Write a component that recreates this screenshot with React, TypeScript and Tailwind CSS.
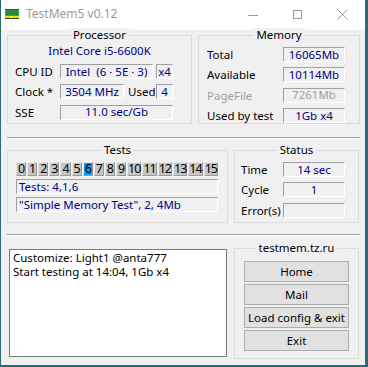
import React from "react";

const tests = Array.from({ length: 16 }, (_, i) => i);

const GroupBox = ({
  title,
  className,
  children,
}: {
  title: string;
  className: string;
  children?: React.ReactNode;
}) => (
  <div className={`relative border border-[#dcdcdc] ${className}`}>
    <span className="absolute left-1/2 -translate-x-1/2 -top-[8px] px-[3px] bg-[#f0f0f0] leading-[14px] whitespace-nowrap">
      {title}
    </span>
    {children}
  </div>
);

const Field = ({
  children,
  className = "",
}: {
  children?: React.ReactNode;
  className?: string;
}) => (
  <div
    className={`h-[15px] flex items-center border border-t-[#a0a0a0] border-l-[#a0a0a0] border-r-white border-b-white leading-none whitespace-nowrap ${className}`}
  >
    {children}
  </div>
);

const Separator = () => (
  <div className="ml-[6px] w-[353px] border-t border-t-[#a0a0a0] border-b border-b-white" />
);

const WinButton = ({ label }: { label: string }) => (
  <div className="h-[21px] flex items-center justify-center bg-[#e1e1e1] border border-[#adadad]">
    {label}
  </div>
);

export default function App() {
  return (
    <div className="w-[368px] h-[367px] bg-[#2b6a74] overflow-hidden font-['Noto_Sans',sans-serif] text-[11.5px] text-black">
      <div className="ml-[1px] w-[364px] h-[365px] bg-[#f0f0f0] flex flex-col">
        {/* title bar */}
        <div className="h-[30px] bg-white flex items-center shrink-0">
          <svg width="14" height="11" viewBox="0 0 14 11" className="ml-[4px] mb-[2px]">
            <rect x="0" y="0" width="14" height="7" fill="#3aa84a" />
            <rect x="0" y="0" width="14" height="1" fill="#1f6b2a" />
            <path d="M2 1v5M4 1v5M6 1v5M8 1v5M10 1v5M12 1v5" stroke="#1f6b2a" strokeWidth="1" />
            <rect x="0" y="7" width="6" height="2" fill="#e5e500" />
            <rect x="7" y="7" width="7" height="2" fill="#e5e500" />
            <rect x="0" y="9" width="14" height="1" fill="#333" />
          </svg>
          <span className="ml-[7px] mb-[2px] text-[12px] text-[#999999]">TestMem5 v0.12</span>
          <div className="ml-auto flex h-full">
            <div className="w-[45px] flex items-center justify-center">
              <div className="w-[10px] h-px bg-[#999999]" />
            </div>
            <div className="w-[45px] flex items-center justify-center">
              <div className="w-[9px] h-[9px] border border-[#999999] mb-[2px]" />
            </div>
            <div className="w-[45px] flex items-center justify-center">
              <svg width="11" height="11" viewBox="0 0 11 11" className="mb-[2px]">
                <path d="M0.5 0.5L10.5 10.5M10.5 0.5L0.5 10.5" stroke="#999999" strokeWidth="1" />
              </svg>
            </div>
          </div>
        </div>

        {/* processor / memory */}
        <div className="flex gap-[6px] pl-[6px] mt-[5px]">
          <GroupBox title="Processor" className="w-[185px] h-[89px]">
            <div className="pt-[8px] h-[22px] leading-[14px] text-center text-[#000080]">
              Intel Core i5-6600K
            </div>
            <div className="mt-[5px] pl-[7px] flex flex-col gap-[3px]">
              <div className="flex items-center">
                <span className="w-[45px]">CPU ID</span>
                <Field className="w-[93px] justify-center text-[#000080]">Intel&nbsp; (6 · 5E · 3)</Field>
                <Field className="ml-[3px] w-[17px] justify-center text-[#000080]">x4</Field>
              </div>
              <div className="flex items-center">
                <span className="w-[45px]">Clock *</span>
                <Field className="w-[64px] justify-center text-[#000080]">3504 MHz</Field>
                <span className="ml-[4px] w-[28px]">Used</span>
                <Field className="w-[17px] justify-center text-[#000080]">4</Field>
              </div>
              <div className="flex items-center">
                <span className="w-[45px]">SSE</span>
                <Field className="w-[113px] justify-center text-[#000080]">11.0 sec/Gb</Field>
              </div>
            </div>
          </GroupBox>
          <GroupBox title="Memory" className="w-[162px] h-[89px]">
            <div className="pt-[10px] pl-[8px] flex flex-col gap-[3px]">
              {[
                ["Total", "16065Mb", false],
                ["Available", "10114Mb", false],
                ["PageFile", "7261Mb", true],
                ["Used by test", "1Gb x4", false],
              ].map(([label, value, dim]) => (
                <div key={label as string} className="flex items-center">
                  <span className={`w-[76px] ${dim ? "text-[#a0a0a0]" : ""}`}>{label}</span>
                  <Field className={`w-[62px] justify-center ${dim ? "text-[#a0a0a0]" : "text-[#000080]"}`}>
                    {value}
                  </Field>
                </div>
              ))}
            </div>
          </GroupBox>
        </div>

        <div className="mt-[13px]">
          <Separator />
        </div>

        {/* tests / status */}
        <div className="flex gap-[6px] pl-[6px] mt-[11px]">
          <GroupBox title="Tests" className="w-[221px] h-[73px]">
            <div className="pt-[11px] pl-[8px] flex flex-col">
              <div className="w-[202px] h-[14px] flex gap-[1px]">
                {tests.map((t) => (
                  <div
                    key={t}
                    className={`flex-1 flex items-center justify-center border border-t-[#e8e8e8] border-l-[#e8e8e8] border-r-[#9a9a9a] border-b-[#9a9a9a] text-[12.5px] tracking-[-1px] leading-none overflow-visible whitespace-nowrap ${
                      t === 6 ? "bg-[#0a9cf0]" : "bg-[#c6c6c6]"
                    }`}
                  >
                    {t}
                  </div>
                ))}
              </div>
              <Field className="mt-[3px] w-[202px] pl-[2px] text-[#000080]">Tests: 4,1,6</Field>
              <Field className="mt-[3px] w-[202px] pl-[2px] text-[#000080]">"Simple Memory Test", 2, 4Mb</Field>
            </div>
          </GroupBox>
          <GroupBox title="Status" className="w-[125px] h-[73px]">
            <div className="pt-[10px] pl-[6px] flex flex-col gap-[3px]">
              {[
                ["Time", "14 sec"],
                ["Cycle", "1"],
                ["Error(s)", ""],
              ].map(([label, value]) => (
                <div key={label} className="flex items-center">
                  <span className="w-[42px]">{label}</span>
                  <Field className="w-[62px] justify-center text-[#000080]">{value}</Field>
                </div>
              ))}
            </div>
          </GroupBox>
        </div>

        <div className="mt-[11px]">
          <Separator />
        </div>

        {/* log / links */}
        <div className="flex items-start pl-[8px] mt-[12px]">
          <div className="mt-[1px] w-[218px] h-[108px] bg-white border border-[#7a7a7a] pl-[3px] pt-[1px] leading-[14px]">
            <div>Customize: Light1 @anta777</div>
            <div>Start testing at 14:04, 1Gb x4</div>
          </div>
          <GroupBox title="testmem.tz.ru" className="ml-[7px] w-[125px] h-[111px]">
            <div className="pt-[12px] pl-[9px] w-[114px] flex flex-col gap-[2px]">
              <WinButton label="Home" />
              <WinButton label="Mail" />
              <WinButton label="Load config & exit" />
              <WinButton label="Exit" />
            </div>
          </GroupBox>
        </div>
      </div>
    </div>
  );
}
